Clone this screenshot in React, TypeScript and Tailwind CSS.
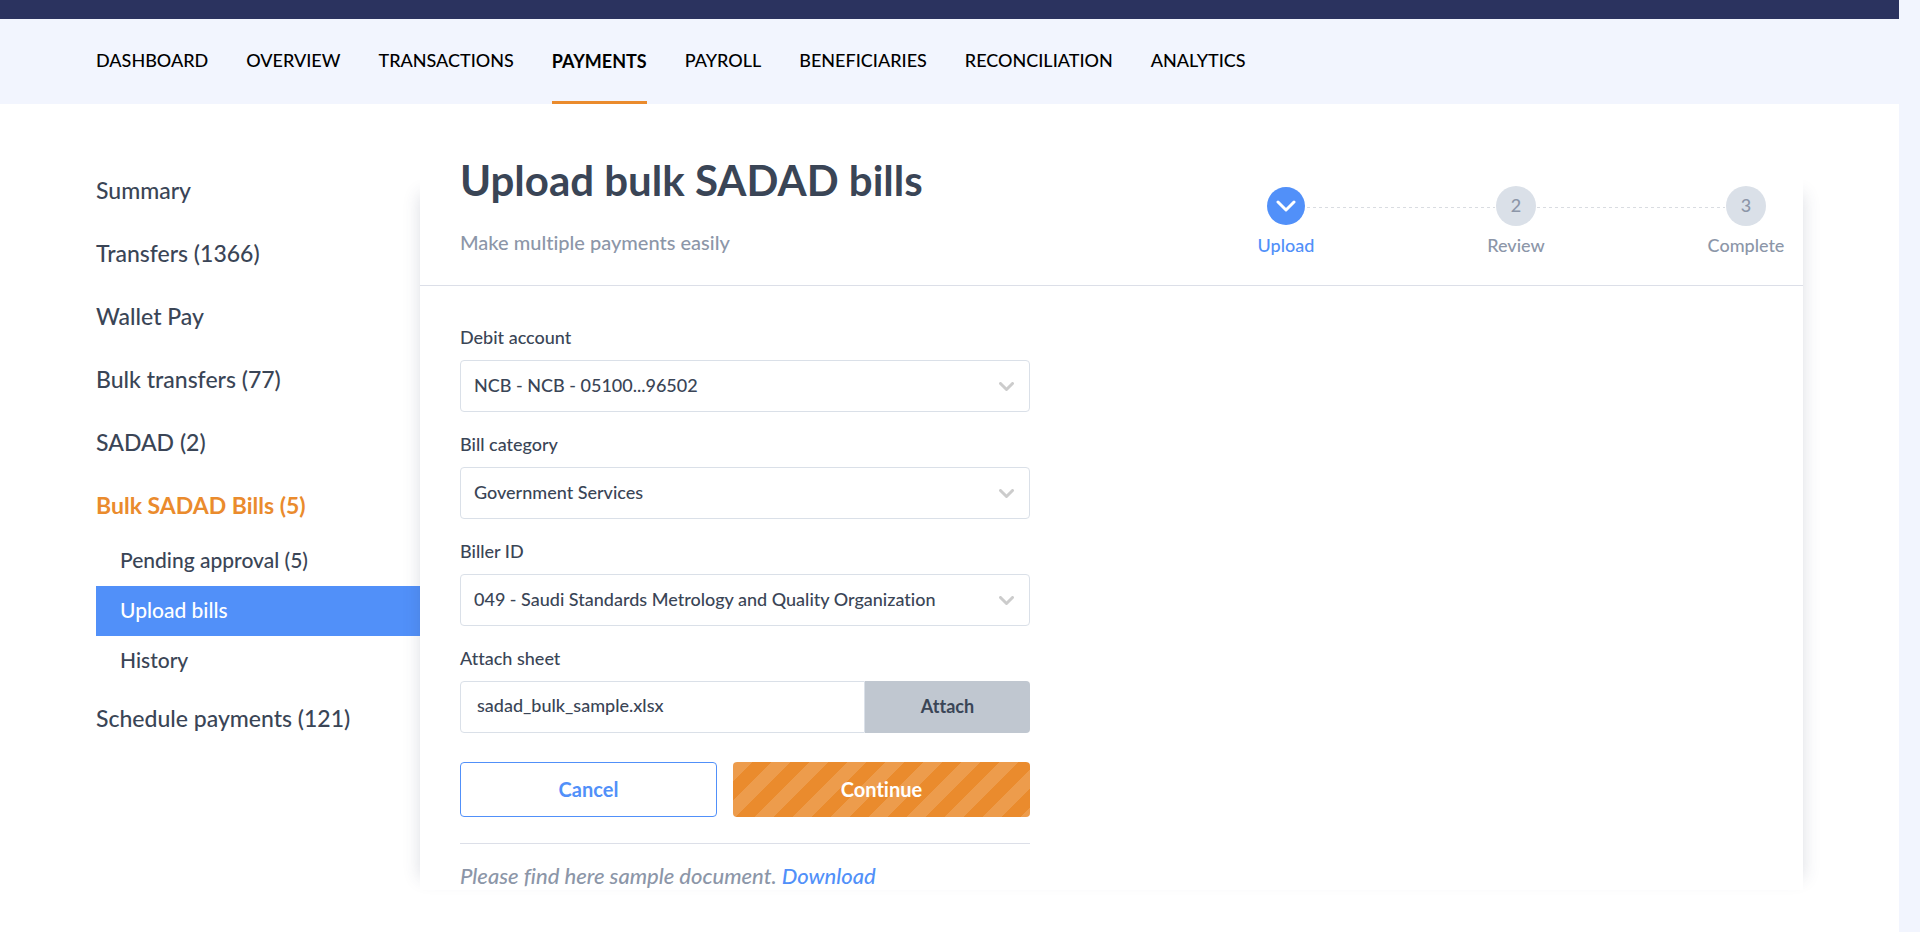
import React from "react";

const topNav = [
  "DASHBOARD",
  "OVERVIEW",
  "TRANSACTIONS",
  "PAYMENTS",
  "PAYROLL",
  "BENEFICIARIES",
  "RECONCILIATION",
  "ANALYTICS",
];

const sideNav = [
  { label: "Summary" },
  { label: "Transfers (1366)" },
  { label: "Wallet Pay" },
  { label: "Bulk transfers (77)" },
  { label: "SADAD (2)" },
  {
    label: "Bulk SADAD Bills (5)",
    children: ["Pending approval (5)", "Upload bills", "History"],
  },
  { label: "Schedule payments (121)" },
];

function Chevron({ className }: { className: string }) {
  return (
    <svg viewBox="0 0 20 12" className={className} fill="none" stroke="currentColor" strokeLinecap="round" strokeLinejoin="round" aria-hidden="true">
      <path d="M2 2l8 8 8-8" />
    </svg>
  );
}

function TopNav() {
  return (
    <header>
      <div className="h-[19px] bg-[#2b335f]" />
      <nav className="flex h-[85px] gap-[38px] bg-[#f2f5fe] px-24 text-[18px] leading-6 text-black">
        {topNav.map((item) =>
          item === "PAYMENTS" ? (
            <a key={item} href="#" aria-current="page" className="flex items-center border-b-3 border-[#ea8b2d] pt-0.5 font-bold">
              {item}
            </a>
          ) : (
            <a key={item} href="#" className="flex items-center pb-1">
              {item}
            </a>
          ),
        )}
      </nav>
    </header>
  );
}

function SideNav() {
  return (
    <nav className="w-[324px] shrink-0 pt-[14px] text-[23px] leading-7">
      <ul>
        {sideNav.map((item) => (
          <li key={item.label}>
            <a
              href="#"
              className={
                item.children
                  ? "flex h-[63px] items-center font-bold text-[#ea8b2d]"
                  : "flex h-[63px] items-center"
              }
            >
              {item.label}
            </a>
            {item.children && (
              <ul className="text-[21px]">
                {item.children.map((child) => (
                  <li key={child}>
                    <a
                      href="#"
                      className={
                        child === "Upload bills"
                          ? "flex h-[50px] items-center bg-[#5190f9] pb-0.5 pl-6 text-white"
                          : "flex h-[50px] items-center pb-0.5 pl-6"
                      }
                    >
                      {child}
                    </a>
                  </li>
                ))}
              </ul>
            )}
          </li>
        ))}
      </ul>
    </nav>
  );
}

function Connector() {
  return (
    <li aria-hidden="true" className="w-[152px] pt-[21px]">
      <div className="-mx-[18px] h-px bg-[repeating-linear-gradient(90deg,#d9dce1_0_3px,transparent_3px_6px)]" />
    </li>
  );
}

function Step({ number, label, active }: { number: number; label: string; active?: boolean }) {
  return (
    <li
      className={
        active
          ? "relative flex w-[78px] flex-col items-center gap-[7px] text-[#5190f9]"
          : "relative flex w-[78px] flex-col items-center gap-[7px] text-[#8c96a8]"
      }
    >
      <span className="flex size-10 items-center justify-center">
        {active ? (
          <span className="flex size-[38px] items-center justify-center rounded-full bg-[#5190f9] text-white">
            <Chevron className="w-5 stroke-3" />
          </span>
        ) : (
          <span className="flex size-10 items-center justify-center rounded-full bg-[#dae0e8] pb-0.5">{number}</span>
        )}
      </span>
      <span>{label}</span>
    </li>
  );
}

function Stepper() {
  return (
    <ol className="flex pt-[42px] text-[18px] leading-6">
      <Step number={1} label="Upload" active />
      <Connector />
      <Step number={2} label="Review" />
      <Connector />
      <Step number={3} label="Complete" />
    </ol>
  );
}

function SelectField({ id, label, value }: { id: string; label: string; value: string }) {
  return (
    <div className="flex flex-col gap-[11px]">
      <label htmlFor={id}>{label}</label>
      <div className="relative">
        <select id={id} className="h-[52px] w-full appearance-none rounded-[4px] border border-[#dae0e8] bg-white pr-12 pb-0.5 pl-[13px]">
          <option>{value}</option>
        </select>
        <Chevron className="pointer-events-none absolute top-[22px] right-4 w-[15px] stroke-4 text-[#cccccc]" />
      </div>
    </div>
  );
}

function UploadForm() {
  return (
    <form className="w-[570px] text-[18px] leading-6" onSubmit={(e) => e.preventDefault()}>
      <div className="flex flex-col gap-5">
        <SelectField id="account" label="Debit account" value="NCB - NCB - 05100...96502" />
        <SelectField id="category" label="Bill category" value="Government Services" />
        <SelectField id="biller" label="Biller ID" value="049 - Saudi Standards Metrology and Quality Organization" />
        <div className="flex flex-col gap-[11px]">
          <label htmlFor="sheet">Attach sheet</label>
          <div className="flex h-[52px]">
            <input
              id="sheet"
              type="text"
              readOnly
              value="sadad_bulk_sample.xlsx"
              className="min-w-0 flex-1 rounded-l-[4px] border border-[#dae0e8] bg-white px-4 pb-1"
            />
            <button type="button" className="w-[165px] rounded-r-[4px] bg-[#c0c7d0] pb-0.5 font-bold">
              Attach
            </button>
          </div>
        </div>
      </div>
      <div className="mt-[29px] flex h-[55px] gap-4 text-[20px] font-bold">
        <button type="button" className="w-[257px] rounded-[4px] border border-[#5190f9] bg-white pb-0.5 text-[#5190f9]">
          Cancel
        </button>
        <button
          type="submit"
          className="flex-1 rounded-[4px] bg-[#ea8b2d] bg-[linear-gradient(135deg,rgba(255,255,255,0.15)_25%,transparent_25%_50%,rgba(255,255,255,0.15)_50%_75%,transparent_75%)] bg-size-[38px_38px] pb-0.5 text-white"
        >
          Continue
        </button>
      </div>
      <p className="mt-[26px] border-t border-[#dcdfe8] pt-[18px] text-[22px] leading-7 text-[#8c96a8] italic">
        Please find here sample document.{" "}
        <a href="#" className="text-[#5190f9]">
          Download
        </a>
      </p>
    </form>
  );
}

export default function App() {
  return (
    <div className="min-h-screen bg-[#f2f5fe] pr-[21px] font-['Lato',sans-serif] font-medium text-[#3a4556] [font-variant-ligatures:none]">
      <div className="flex min-h-screen flex-col bg-white">
        <TopNav />
        <div className="flex px-24 pt-10">
          <SideNav />
          <main className="relative min-w-0 flex-1">
            <div className="absolute inset-x-0 top-[50px] bottom-3 shadow-[0_0_16px_rgba(58,69,100,0.18)]" />
            <div className="relative bg-white">
              <div className="flex justify-between border-b border-[#dcdfe8] pr-[18px] pl-10">
                <div className="pt-3 pb-[29px]">
                  <h1 className="text-[42px] leading-12 font-bold">Upload bulk SADAD bills</h1>
                  <p className="mt-6 text-[20px] leading-7 text-[#8c96a8]">Make multiple payments easily</p>
                </div>
                <Stepper />
              </div>
              <div className="pt-[39px] pl-10">
                <UploadForm />
              </div>
            </div>
          </main>
        </div>
      </div>
    </div>
  );
}
